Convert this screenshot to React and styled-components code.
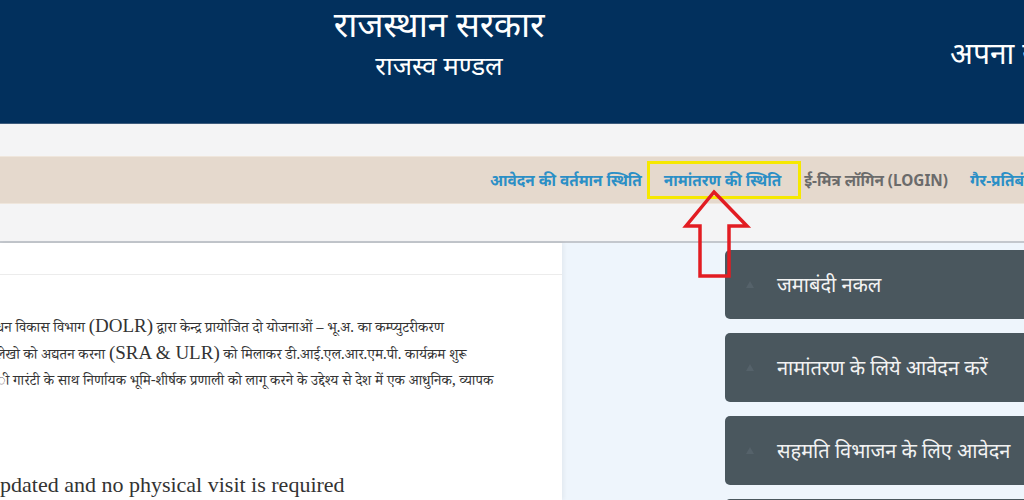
import React from "react";
import styled, { createGlobalStyle } from "styled-components";

const Global = createGlobalStyle`
  html, body { margin: 0; padding: 0; }
  body {
    width: 1024px;
    height: 500px;
    overflow: hidden;
    background: #f4f4f5;
    font-family: "Noto Sans", "Liberation Sans", sans-serif;
  }
`;

const Page = styled.div`
  position: relative;
  width: 1024px;
  height: 500px;
  overflow: hidden;
  display: flex;
  flex-direction: column;
`;

const Header = styled.header`
  height: 124px;
  flex: none;
  background: #02305d;
  border-bottom: 1px solid #3d5b7c;
  box-sizing: border-box;
  display: grid;
  grid-template-columns: 878px 1fr;
  color: #ffffff;
  overflow: hidden;
`;

const TitleBlock = styled.div`
  display: flex;
  flex-direction: column;
  align-items: center;
`;

const Title = styled.div`
  font-size: 35.5px;
  line-height: 47px;
  letter-spacing: -0.3px;
`;

const SubTitle = styled.div`
  font-size: 26px;
  line-height: 36px;
`;

const SideTitle = styled.div`
  font-size: 30px;
  line-height: 40px;
  padding-top: 33px;
  padding-left: 72px;
  white-space: nowrap;
  overflow: hidden;
`;

const Strip = styled.div`
  height: ${(p) => p.$h}px;
  flex: none;
  background: #f4f4f5;
`;

const NavBar = styled.nav`
  height: 48px;
  flex: none;
  background: #e5d9cd;
  border-top: 1px solid #efe6dc;
  border-bottom: 1px solid #efe6dc;
  box-sizing: border-box;
  display: flex;
  align-items: center;
  padding-left: 479px;
  white-space: nowrap;
  overflow: hidden;
`;

const NavLink = styled.a`
  font-family: "Noto Sans", "Liberation Sans", sans-serif;
  font-weight: 700;
  font-size: 15.3px;
  color: ${(p) => (p.$muted ? "#6b6b6b" : "#2b8fc6")};
  text-decoration: none;
  padding: ${(p) => (p.$active ? "0 17px 0 14px" : "0 8px")};
  margin: ${(p) => (p.$active ? "0 -8px 0 -6px" : "0")};
  height: 38px;
  display: flex;
  align-items: center;
  flex: none;
  box-sizing: border-box;
  border: 3px solid ${(p) => (p.$active ? "#f6e800" : "transparent")};
`;

const Divider = styled.div`
  height: 2px;
  flex: none;
  background: #c3c7cd;
`;

const Main = styled.main`
  flex: 1;
  display: grid;
  grid-template-columns: 562px 1fr;
  min-height: 0;
`;

const LeftPanel = styled.section`
  background: #ffffff;
  display: flex;
  flex-direction: column;
  box-shadow: 2px 0 4px rgba(0, 0, 0, 0.05);
  z-index: 1;
  overflow: hidden;
`;

const PanelHead = styled.div`
  height: 31px;
  flex: none;
  border-bottom: 1px solid #ececec;
`;

const Body = styled.div`
  padding-top: 42px;
  font-family: "Noto Serif Devanagari", "Liberation Serif", serif;
  color: #333333;
  overflow: hidden;
`;

const Line = styled.p`
  margin: 0;
  font-size: 14.5px;
  line-height: 26.7px;
  height: 26.7px;
  white-space: nowrap;
  margin-left: ${(p) => p.$indent || 0}px;
`;

const Latin = styled.span`
  font-family: "Liberation Serif", serif;
  font-size: 19px;
  line-height: 0;
`;

const BigLine = styled.p`
  margin: 75px 0 0;
  font-size: 22px;
  line-height: 26px;
  white-space: nowrap;
  font-family: "Liberation Serif", serif;
`;

const RightPanel = styled.aside`
  background: #eef5fc;
  padding: 7px 0 0 163px;
  display: flex;
  flex-direction: column;
  gap: 14px;
  overflow: hidden;
`;

const Card = styled.div`
  width: 330px;
  height: 69px;
  flex: none;
  background: #4a575e;
  border-radius: 5px;
  display: flex;
  align-items: center;
  padding-left: 20px;
  box-sizing: border-box;
  color: #f2f2f2;
  font-size: 20px;
  white-space: nowrap;
`;

const CardIcon = styled.span`
  width: 12px;
  margin-right: 20px;
  display: flex;
  align-items: center;
`;

const Arrow = styled.svg`
  position: absolute;
  left: 682px;
  top: 189px;
  pointer-events: none;
  z-index: 5;
`;

const items = [
  "जमाबंदी नकल",
  "नामांतरण के लिये आवेदन करें",
  "सहमति विभाजन के लिए आवेदन",
  "",
];

export default function App() {
  return (
    <>
      <Global />
      <Page>
        <Header>
          <TitleBlock>
            <Title>राजस्थान सरकार</Title>
            <SubTitle>राजस्व मण्डल</SubTitle>
          </TitleBlock>
          <SideTitle>अपना खाता</SideTitle>
        </Header>
        <Strip $h={32} />
        <NavBar>
          <NavLink>आवेदन की वर्तमान स्थिति</NavLink>
          <NavLink $active>नामांतरण की स्थिति</NavLink>
          <NavLink $muted>ई-मित्र लॉगिन (LOGIN)</NavLink>
          <NavLink>गैर-प्रतिबंधित भूमि</NavLink>
        </NavBar>
        <Strip $h={37} />
        <Divider />
        <Main>
          <LeftPanel>
            <PanelHead />
            <Body>
              <Line $indent={-4}>धन विकास विभाग <Latin>(DOLR)</Latin> द्वारा केन्द्र प्रायोजित दो योजनाओं – भू.अ. का कम्प्युटरीकरण</Line>
              <Line $indent={-4}>लेखो को अद्यतन करना <Latin>(SRA &amp; ULR)</Latin> को मिलाकर डी.आई.एल.आर.एम.पी. कार्यक्रम शुरू</Line>
              <Line $indent={-3}>ी गारंटी के साथ निर्णायक भूमि-शीर्षक प्रणाली को लागू करने के उद्देश्य से देश में एक आधुनिक, व्यापक</Line>
              <BigLine>pdated and no physical visit is required</BigLine>
            </Body>
          </LeftPanel>
          <RightPanel>
            {items.map((t, i) => (
              <Card key={i}>
                <CardIcon>
                  <svg width="10" height="10" viewBox="0 0 10 10">
                    <path d="M5 1 L9 8 L1 8 Z" fill="#55626a" />
                  </svg>
                </CardIcon>
                {t}
              </Card>
            ))}
          </RightPanel>
        </Main>
        <Arrow width="70" height="92" viewBox="0 0 70 92">
          <path
            d="M32 3 L65 37 L47 37 L47 87 L18 87 L18 37 L4 37 Z"
            fill="none"
            stroke="#e21c22"
            strokeWidth="3.5"
            strokeLinejoin="miter"
          />
        </Arrow>
      </Page>
    </>
  );
}
